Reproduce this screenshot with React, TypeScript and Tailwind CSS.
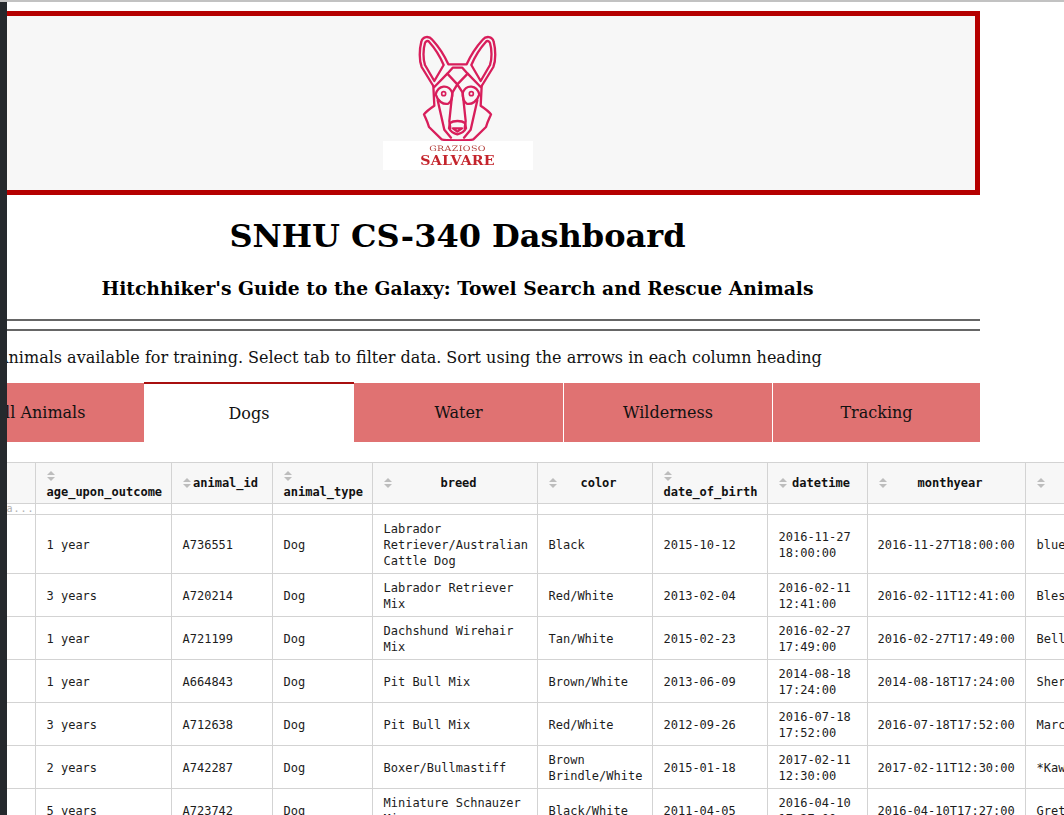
const cols = [
  { w: 28, name: "", stack: false, hide: true },
  { w: 136, name: "age_upon_outcome", stack: true },
  { w: 101, name: "animal_id", stack: false },
  { w: 100, name: "animal_type", stack: true },
  { w: 165, name: "breed", stack: false },
  { w: 115, name: "color", stack: false },
  { w: 115, name: "date_of_birth", stack: true },
  { w: 100, name: "datetime", stack: false },
  { w: 158, name: "monthyear", stack: false },
  { w: 120, name: "name", stack: false },
];

const rows = [
  ["", "1 year", "A736551", "Dog", "Labrador Retriever/Australian Cattle Dog", "Black", "2015-10-12", "2016-11-27 18:00:00", "2016-11-27T18:00:00", "blue"],
  ["", "3 years", "A720214", "Dog", "Labrador Retriever Mix", "Red/White", "2013-02-04", "2016-02-11 12:41:00", "2016-02-11T12:41:00", "Blessing"],
  ["", "1 year", "A721199", "Dog", "Dachshund Wirehair Mix", "Tan/White", "2015-02-23", "2016-02-27 17:49:00", "2016-02-27T17:49:00", "Bella"],
  ["", "1 year", "A664843", "Dog", "Pit Bull Mix", "Brown/White", "2013-06-09", "2014-08-18 17:24:00", "2014-08-18T17:24:00", "Sherman"],
  ["", "3 years", "A712638", "Dog", "Pit Bull Mix", "Red/White", "2012-09-26", "2016-07-18 17:52:00", "2016-07-18T17:52:00", "Marcy"],
  ["", "2 years", "A742287", "Dog", "Boxer/Bullmastiff", "Brown Brindle/White", "2015-01-18", "2017-02-11 12:30:00", "2017-02-11T12:30:00", "*Kawhi"],
  ["", "5 years", "A723742", "Dog", "Miniature Schnauzer Mix", "Black/White", "2011-04-05", "2016-04-10 17:27:00", "2016-04-10T17:27:00", "Gretchen"],
];

function SortIcon() {
  return (
    <svg width="8" height="10" viewBox="0 0 8 10" className="block shrink-0">
      <path d="M4 0 L8 4 L0 4 Z M0 6 L8 6 L4 10 Z" fill="#bdbdbd" />
    </svg>
  );
}

function DogLogo() {
  return (
    <svg width="85" height="106" viewBox="0 12 255 318" fill="none" stroke="#d81e5b" strokeWidth="7" strokeLinejoin="round" strokeLinecap="round" className="block shrink-0 blur-[0.3px]">
      {/* ears and top of the head */}
      <path d="M55 165 L20 108 C12 88 13 55 19 32 C23 15 42 14 52 26 C70 46 88 72 100 100 L155 100 C167 72 185 46 203 26 C213 14 232 15 236 32 C242 55 243 88 235 108 L200 165" />
      <path d="M30 36 C24 55 24 85 30 102 L58 150 L86 102 C76 78 60 52 42 32 C38 28 32 30 30 36 Z" />
      <path d="M225 36 C231 55 231 85 225 102 L197 150 L169 102 C179 78 195 52 213 32 C217 28 223 30 225 36 Z" />
      {/* jaw and cheeks */}
      <path d="M55 165 L58 224 C46 232 34 240 27 250 C32 262 38 272 42 288 L80 325 C88 329 167 329 175 325 L213 288 C217 272 223 262 228 250 C221 240 209 232 197 224 L200 165" />
      {/* forehead */}
      <path d="M97 128 L113 110 L142 110 L158 128 L127 160 Z" />
      <path d="M58 168 L97 128 M197 168 L158 128" />
      {/* eyes */}
      <path d="M62 190 C70 162 100 158 112 185 C113 200 108 212 100 218 C84 222 68 210 62 190 Z" />
      <path d="M193 190 C185 162 155 158 143 185 C142 200 147 212 155 218 C171 222 187 210 193 190 Z" />
      <circle cx="86" cy="188" r="6" strokeWidth="5" />
      <circle cx="169" cy="188" r="6" strokeWidth="5" />
      {/* muzzle */}
      <path d="M112 185 L127 160 L143 185 M112 185 L103 270 L106 292 M143 185 L152 270 L149 292" />
      <path d="M68 208 L88 296 L108 320 M187 208 L167 296 L147 320" />
      <path d="M105 276 C115 268 140 268 150 276 L153 292 C146 306 136 308 127 310 C118 308 109 306 102 292 Z" />
      <path d="M114 292 L141 292 L127 302 Z" />
    </svg>
  );
}

export default function App() {
  return (
    <div className="flex h-[815px] w-[1064px] flex-col overflow-hidden bg-white font-['DejaVu_Serif',serif] text-[#111]">
      <div className="h-[2px] shrink-0 bg-[#c2c2c2]" />
      <div className="flex min-h-0 flex-1">
        <div className="w-[7px] shrink-0 bg-[#25292d]" />
        <div className="min-w-0 flex-1 overflow-hidden">
          <div className="ml-[-72px] w-[1045px]">
            <div className="mt-[9px] flex h-[184px] flex-col items-center border-[5px] border-[#b50000] bg-[#f7f7f7] pt-[19px]">
              <DogLogo />
              <div className="flex h-[29px] w-[150px] shrink-0 flex-col items-center bg-white pt-[3px] font-['DejaVu_Serif',serif]">
                <span className="scale-x-[1.26] text-[7.5px] leading-[9px] tracking-[0.3px] text-[#b5403c]">GRAZIOSO</span>
                <span className="mt-[1px] scale-x-[1.18] text-[12px] leading-[15px] font-bold tracking-[0.2px] text-[#c4242c]">SALVARE</span>
              </div>
            </div>
            <h1 className="mt-[19px] text-center text-[32px] leading-[44px] font-bold text-black">SNHU CS-340 Dashboard</h1>
            <h3 className="mt-[17px] text-center text-[18.72px] leading-[26px] font-bold text-black">Hitchhiker's Guide to the Galaxy: Towel Search and Rescue Animals</h3>
            <div className="mt-[18px] h-[2px] bg-[#666]" />
            <div className="mt-[8px] h-[2px] bg-[#666]" />
            <p className="mt-[16px] ml-[62px] text-[16px] leading-[22px] whitespace-nowrap text-[#111]">Animals available for training. Select tab to filter data. Sort using the arrows in each column heading</p>
            <div className="mt-[14px] flex h-[59px] text-[16px]">
              <div className="flex w-[209px] items-center justify-center bg-[#e07272]">All Animals</div>
              <div className="-mt-[1px] flex h-[60px] w-[210px] items-center justify-center border-t-2 border-[#a80f0f] bg-white pt-[1px]">Dogs</div>
              <div className="flex w-[210px] items-center justify-center border-r border-white bg-[#e07272]">Water</div>
              <div className="flex w-[209px] items-center justify-center border-r border-white bg-[#e07272]">Wilderness</div>
              <div className="flex w-[207px] items-center justify-center bg-[#e07272]">Tracking</div>
            </div>
            <div className="mt-[20px] ml-[72px] w-[1200px]">
              <table className="table-fixed border-collapse font-['DejaVu_Sans_Mono',monospace] text-[12px] leading-[16px] text-[#1c1c1c]" style={{ width: cols.reduce((a, c) => a + c.w, 0) }}>
                <colgroup>
                  {cols.map((c, i) => (
                    <col key={i} style={{ width: c.w }} />
                  ))}
                </colgroup>
                <thead>
                  <tr className="h-[41px] bg-[#f7f7f7]">
                    {cols.map((c, i) => (
                      <th key={i} className="border border-l-0 border-[#d3d3d3] py-0 pr-[13px] pl-[11px] font-bold text-[#111]">
                        {c.hide ? null : c.stack ? (
                          <div className="flex flex-col items-start gap-[3px] pt-[4px] whitespace-nowrap">
                            <SortIcon />
                            <span>{c.name}</span>
                          </div>
                        ) : (
                          <div className="flex items-center gap-[2px]">
                            <SortIcon />
                            <span className="flex-1 text-center">{c.name}</span>
                          </div>
                        )}
                      </th>
                    ))}
                  </tr>
                  <tr className="h-[11px]">
                    {cols.map((c, i) => (
                      <td key={i} className="overflow-hidden border border-l-0 border-[#d3d3d3] p-0 text-[10px] leading-[10px] tracking-[1px] text-[#b0b0b0]">
                        {i === 0 ? <div className="flex justify-end whitespace-nowrap">filter data...</div> : null}
                      </td>
                    ))}
                  </tr>
                </thead>
                <tbody>
                  {rows.map((r, i) => (
                    <tr key={i}>
                      {r.map((v, j) => (
                        <td key={j} className={j === 8 ? "border border-l-0 border-[#d3d3d3] pt-[6px] pr-[9px] pb-[4px] pl-[10px] align-middle whitespace-nowrap" : "border border-l-0 border-[#d3d3d3] pt-[6px] pr-[9px] pb-[4px] pl-[11px] align-middle"}>
                          {v}
                        </td>
                      ))}
                    </tr>
                  ))}
                </tbody>
              </table>
            </div>
          </div>
        </div>
      </div>
    </div>
  );
}
